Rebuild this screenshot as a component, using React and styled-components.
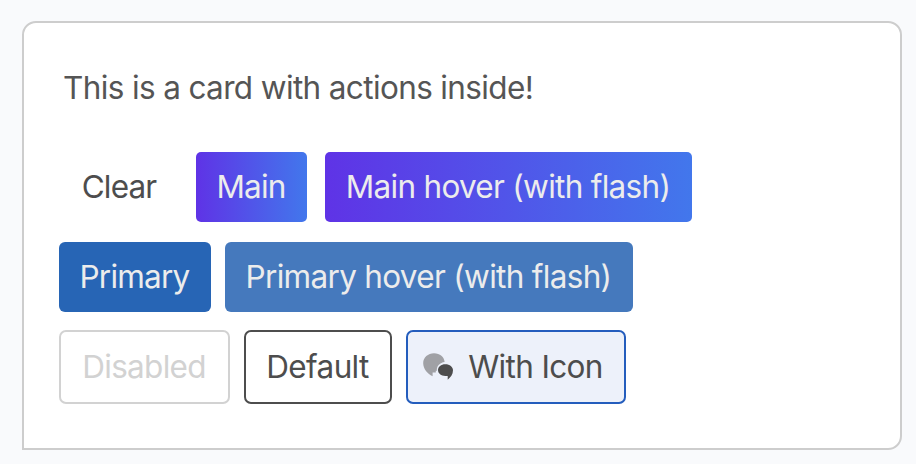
import React from 'react';
import styled, { createGlobalStyle, css } from 'styled-components';

const GlobalStyle = createGlobalStyle`
  *, *::before, *::after { box-sizing: border-box; }
  html, body { margin: 0; padding: 0; }
  body {
    height: 464px;
    overflow: hidden;
    background: #f9fafc;
    color: #555;
    font-family: Inter, "Liberation Sans", sans-serif;
    font-size: 31.5px;
    font-weight: 430;
  }
`;

const Page = styled.main`
  padding: 21px 14px 14px 22px;
`;

const Card = styled.section`
  height: 429px;
  padding: 43px 35px 0;
  background: #fff;
  border: 2px solid #cdcdcd;
  border-radius: 14px 14px 14px 0;
`;

const Message = styled.p`
  margin: 0 0 42px;
  padding-left: 4px;
  line-height: 44px;
  letter-spacing: -0.63px;
  white-space: nowrap;
`;

const Actions = styled.div`
  display: flex;
  flex-direction: column;
`;

const ActionRow = styled.div`
  display: flex;
  gap: ${({ $gap }) => $gap || 14}px;
  margin-bottom: ${({ $after }) => $after || 0}px;
`;

const variants = {
  clear: css`
    padding: 0 0 2px 1px;
    background: transparent;
  `,
  main: css`
    color: #ececec;
    background: linear-gradient(to right, #5f33e6, #4277ec);
  `,
  primary: css`
    color: #ececec;
    background: #2765b5;
    border-radius: 6px;
  `,
  primaryHover: css`
    color: #ececec;
    background: #4579bd;
    border-radius: 6px;
  `,
  disabled: css`
    color: #d2d2d2;
    border: 2px solid #d2d2d2;
  `,
  outline: css`
    border: 2px solid #4d4d4d;
  `,
  icon: css`
    padding-right: 6px;
    background: #edf1fa;
    border: 2px solid #245dbd;
  `,
};

const Button = styled.button`
  display: flex;
  align-items: center;
  justify-content: center;
  width: ${({ $width }) => $width}px;
  height: ${({ $tall }) => ($tall ? 74 : 70)}px;
  padding: 0 1px 2px 0;
  border: 0;
  border-radius: ${({ $tall }) => ($tall ? 7 : 5)}px;
  background: #fff;
  color: #4d4d4d;
  font: inherit;
  letter-spacing: ${({ $tracking }) => $tracking || 0}px;
  white-space: nowrap;
  ${({ $variant }) => variants[$variant]}
`;

const ChatIcon = styled.svg`
  width: 30px;
  height: 28px;
  margin: 2px 15px 0 0;
`;

export default function App() {
  return (
    <Page>
      <GlobalStyle />
      <Card>
        <Message>This is a card with actions inside!</Message>
        <Actions>
          <ActionRow $gap={18} $after={20}>
            <Button $variant="clear" $width={119} $tracking={-0.85}>Clear</Button>
            <Button $variant="main" $width={111} $tracking={-0.85}>Main</Button>
            <Button $variant="main" $width={367} $tracking={-0.71}>Main hover (with flash)</Button>
          </ActionRow>
          <ActionRow $after={18}>
            <Button $variant="primary" $width={152} $tracking={-0.77}>Primary</Button>
            <Button $variant="primaryHover" $width={408} $tracking={-0.69}>Primary hover (with flash)</Button>
          </ActionRow>
          <ActionRow>
            <Button $variant="disabled" $tall $width={171} $tracking={-0.7} disabled>Disabled</Button>
            <Button $variant="outline" $tall $width={148} $tracking={-0.65}>Default</Button>
            <Button $variant="icon" $tall $width={220} $tracking={-0.65}>
              <ChatIcon viewBox="0 0 30 28" aria-hidden="true">
                <path d="M11 0.3C17 0.3 21.3 4 21.6 9C17 9.6 13.8 12.8 13.8 17L14 17.8H12.8V19.6H9.6V23.3C4.5 20.5 0.2 16 0.2 10.2C0.2 4.5 5 0.3 11 0.3Z" fill="#a0a1a5" />
                <path d="M22.3 11.2C26.8 11.2 30 13.8 30 17.3C30 21.4 27.5 24.5 24.7 26.8V22.9H22.3C18.1 22.9 15 20.6 15 17.1C15 13.6 18.1 11.2 22.3 11.2Z" fill="#4d4d4d" />
              </ChatIcon>
              With Icon
            </Button>
          </ActionRow>
        </Actions>
      </Card>
    </Page>
  );
}
